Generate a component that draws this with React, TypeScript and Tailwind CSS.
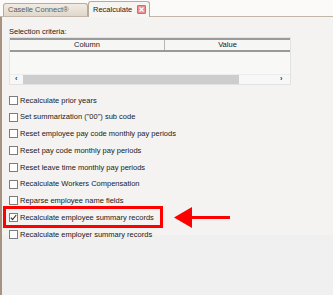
import React from "react";

const options = [
  { label: "Recalculate prior years", checked: false },
  { label: 'Set summarization ("00") sub code', checked: false },
  { label: "Reset employee pay code monthly pay periods", checked: false },
  { label: "Reset pay code monthly pay periods", checked: false },
  { label: "Reset leave time monthly pay periods", checked: false },
  { label: "Recalculate Workers Compensation", checked: false },
  { label: "Reparse employee name fields", checked: false },
  { label: "Recalculate employee summary records", checked: true },
  { label: "Recalculate employer summary records", checked: false },
];

function CheckBox({ checked }: { checked: boolean }) {
  return (
    <span className="w-[9px] h-[9px] shrink-0 border border-[#7d7d7d] bg-white flex items-center justify-center">
      {checked && (
        <svg width="7" height="7" viewBox="0 0 7 7">
          <path d="M0.8 3.6 L2.6 5.6 L6.2 1" fill="none" stroke="#333" strokeWidth="1.1" />
        </svg>
      )}
    </span>
  );
}

export default function App() {
  return (
    <div className="relative w-[333px] h-[295px] overflow-hidden bg-[#f0f0f0] font-['Liberation_Sans',Arial,sans-serif] text-[7.5px] leading-none text-[#1a1a1a] flex flex-col">
      {/* Tab strip */}
      <div className="h-[17px] shrink-0 flex items-end pl-[3px] bg-[#fbfaf8] border-b border-[#c2b6aa]">
        <div className="h-[13px] w-[85px] rounded-t-[3px] border border-b-0 border-[#b9aa9b] bg-gradient-to-b from-[#f1ece4] to-[#e0d7ca] flex items-center pl-[4px] text-[#5c5c5c]">
          Caselle Connect®
        </div>
        <div className="h-[16px] w-[62px] -mb-px rounded-t-[3px] border border-b-0 border-[#b9aa9b] bg-[#f6f5f2] flex items-center pl-[4px] pr-[3px] text-[#222]">
          <span className="flex-1">Recalculate</span>
          <span className="w-[9px] h-[9px] rounded-[1px] border border-[#d46a6a] bg-[#f08f8f] flex items-center justify-center">
            <svg width="5" height="5" viewBox="0 0 5 5">
              <path d="M0.5 0.5 L4.5 4.5 M4.5 0.5 L0.5 4.5" stroke="#fff" strokeWidth="1.2" />
            </svg>
          </span>
        </div>
      </div>

      {/* Body */}
      <div className="flex-1 flex flex-col border-l-2 border-[#a89282]">
        <div className="h-[218px] shrink-0 bg-[#f4f3f1] flex flex-col pt-[10px]">
          <div className="pl-[7px] h-[9px] pt-px">Selection criteria:</div>

          {/* Criteria grid */}
          <div className="ml-[7px] mt-px w-[282px] h-[49px] border border-[#e2e2e2] bg-[#f8f8f7] flex flex-col">
            <div className="h-[14px] flex border-y-2 border-[#9a9a9a] bg-[#f6f6f5]">
              <div className="w-[155px] flex items-center justify-center border-r border-[#b5b5b5]">Column</div>
              <div className="flex-1 flex items-center justify-center">Value</div>
            </div>
            <div className="h-[22px]" />
            <div className="h-[10px] flex items-center border-t border-[#ececec] bg-[#f7f7f7]">
              <span className="w-[13px] pl-[5px] text-[#333] font-bold">‹</span>
              <span className="w-[216px] h-[9px] bg-[#cdcdcd]" />
              <span className="flex-1" />
              <span className="w-[10px] text-[#333] font-bold">›</span>
            </div>
          </div>

          {/* Options */}
          <div className="mt-[7.6px] flex flex-col pl-[7px]">
            {options.map((o) => (
              <div key={o.label} className="h-[16.75px] shrink-0 flex items-center gap-[2px]">
                <CheckBox checked={o.checked} />
                <span>{o.label}</span>
              </div>
            ))}
          </div>
        </div>
      </div>

      {/* Annotation */}
      <div className="absolute left-[3px] top-[206px] w-[160px] h-[22px] border-[3px] border-[#ff0000]" />
      <svg className="absolute left-[172px] top-[205px]" width="60" height="25" viewBox="0 0 60 25">
        <polygon points="2,12.5 20,2 20,23" fill="#ff0000" />
        <rect x="19" y="11" width="39" height="3" fill="#ff0000" />
      </svg>
    </div>
  );
}
